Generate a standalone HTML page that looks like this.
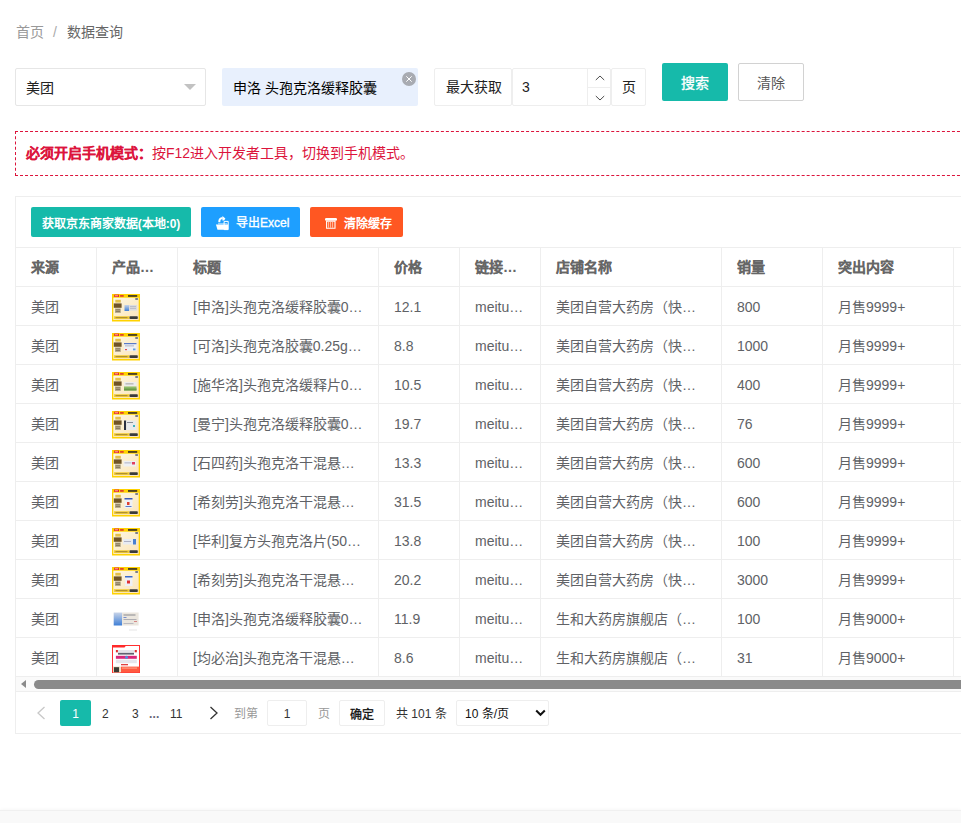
<!DOCTYPE html>
<html lang="zh-CN"><head><meta charset="utf-8">
<style>
*{box-sizing:border-box;margin:0;padding:0}
html,body{width:961px;height:823px;overflow:hidden;background:#fff}
body{font-family:"Liberation Sans",sans-serif;font-size:14px;color:#606266;position:relative}
.abs{position:absolute}
i{display:block}
.bc{left:16px;top:22px;line-height:20px;font-size:14px;color:#999}
.bc .sep{margin:0 10px 0 9px;color:#aaa}
.bc .cur{color:#666}
.sel{left:15px;top:68px;width:191px;height:38px;border:1px solid #e6e6e6;border-radius:2px}
.sel span{position:absolute;left:10px;top:9px;line-height:20px;color:#222}
.tri{position:absolute;left:168px;top:15px;width:0;height:0;border-left:6px solid transparent;border-right:6px solid transparent;border-top:6px solid #c2c2c2}
.tag{left:222px;top:68px;width:196px;height:38px;background:#e8f0fd;border-radius:2px}
.tag span{position:absolute;left:11px;top:10px;line-height:20px;color:#000}
.tagx{position:absolute;left:180px;top:4px;width:14px;height:14px;border-radius:50%;background:#a8abb2}
.grp{top:68px;height:38px;border:1px solid #eee;border-radius:2px;background:#fff}
.grp span{position:absolute;top:8px;line-height:20px;color:#222}
.btn{position:absolute;text-align:center;border-radius:2px}
.search{left:662px;top:63px;width:66px;height:38px;background:#16baaa;color:#fff;line-height:38px;padding-top:1px;-webkit-text-stroke:0.35px #fff}
.clear{left:738px;top:63px;width:66px;height:38px;border:1px solid #d2d2d2;color:#555;line-height:36px;padding-top:1px;background:#fff}
.alert{left:15px;top:131px;width:960px;height:45px;border:1px dashed #dc143c;color:#dc143c;}
.alert span{position:absolute;left:10px;top:11px;line-height:20px}
.box{left:15px;top:196px;width:960px;height:538px;border:1px solid #eee;border-right:none}
.tb{position:absolute;top:207px;height:30px;line-height:30px;padding-top:2px;color:#fff;font-size:12px;border-radius:2px;text-align:center}
.tbl{position:absolute;left:16px;top:247px;width:945px}
.row{display:flex;height:39px;border-top:1px solid #eee}
.row>div{flex:none;border-right:1px solid #eee;padding:1px 15px 0;line-height:38px;white-space:nowrap;overflow:hidden;text-overflow:ellipsis;position:relative}
.hd>div{font-weight:bold;color:#666;padding-top:0;-webkit-text-stroke:0.1px #666}
.c1{width:81px}.c2{width:81px}.c3{width:201px}.c4{width:81px}.c5{width:81px}.c6{width:181px}.c7{width:101px}.c8{width:131px}.c9{width:100px}
.img{position:absolute;left:15px;top:7px;width:28px;height:28px}
.sbar{position:absolute;left:16px;top:676px;width:945px;height:16px;background:#fafafa;border-top:1px solid #eee;border-bottom:1px solid #eee}
.thumb{position:absolute;left:18px;top:3px;width:940px;height:9px;border-radius:4.5px;background:#8a8a8a}
.larr{position:absolute;left:5px;top:3px;width:0;height:0;border-top:4.5px solid transparent;border-bottom:4.5px solid transparent;border-right:5px solid #8a8a8a}
.pg{position:absolute;font-size:12px;line-height:26px;padding-top:1px;top:700px;height:26px;color:#333}
</style></head><body>
<svg width="0" height="0" style="position:absolute">
<defs>
<linearGradient id="cg" x1="0" y1="0" x2="1" y2="1"><stop offset="0" stop-color="#fdf6e4"/><stop offset="0.6" stop-color="#fcecc8"/><stop offset="1" stop-color="#fbe3c0"/></linearGradient>
<linearGradient id="bg1" x1="0" y1="0" x2="0" y2="1"><stop offset="0" stop-color="#c8d4e8"/><stop offset="1" stop-color="#3f7fd6"/></linearGradient>
<symbol id="y" viewBox="0 0 28 28">
<rect x="0" y="0" width="28" height="27.5" fill="#ffd200"/>
<rect x="1.3" y="3.7" width="25.4" height="22.3" fill="url(#cg)"/>
<rect x="2.2" y="0.6" width="4.8" height="2.4" fill="#e52a2a"/>
<rect x="3" y="1.3" width="3" height="1" fill="#ffb0a0"/>
<rect x="8.1" y="1" width="3.6" height="1.8" fill="#e2452a"/>
<rect x="16" y="1" width="9.2" height="1.9" fill="#4f4320"/>
<rect x="23.3" y="4.2" width="2.6" height="1.6" fill="#59607a"/>
<rect x="3.3" y="5.8" width="5.5" height="2.8" fill="#e2c04a"/>
<rect x="1.8" y="9.4" width="7.8" height="4.4" fill="#6f5426"/>
<rect x="3" y="14.5" width="5.8" height="4.4" fill="#b4a888"/>
<rect x="3.8" y="15.5" width="4.2" height="0.7" fill="#7a6a50"/>
<rect x="3.8" y="17.2" width="4.2" height="0.7" fill="#7a6a50"/>
<rect x="2" y="22.2" width="15.5" height="2.9" fill="#f2cd3a"/>
<rect x="3.5" y="23" width="12" height="1.2" fill="#b09030"/>
<rect x="17.5" y="22.2" width="8.3" height="2.9" rx="0.8" fill="#3b3b3b"/>
</symbol>
<symbol id="p1" viewBox="0 0 28 28"><rect x="12.5" y="11" width="4.6" height="6" fill="url(#bg1)"/><rect x="17.1" y="11" width="7.9" height="5.6" fill="#dcdce0"/><rect x="18" y="12.5" width="6" height="0.6" fill="#9aa0b0"/><rect x="18" y="14.3" width="6" height="0.6" fill="#a8aab8"/></symbol>
<symbol id="p2" viewBox="0 0 28 28"><rect x="12" y="10" width="12.5" height="8" fill="#eef0f4"/><rect x="12" y="10" width="12.5" height="1.2" fill="#5a7ac8"/><rect x="13" y="12.5" width="9" height="0.8" fill="#a0a4b8"/><rect x="13" y="16" width="2" height="1.2" fill="#e05050"/><rect x="21" y="15.5" width="2.5" height="1.8" fill="#60a0e0"/></symbol>
<symbol id="p3" viewBox="0 0 28 28"><rect x="12" y="10" width="12.5" height="4.5" fill="#ececec"/><rect x="13.5" y="11.5" width="8" height="0.8" fill="#909090"/><rect x="12" y="14.5" width="12.5" height="4" fill="#8cbc6a"/><rect x="12" y="16.5" width="12.5" height="2" fill="#6a9a48"/></symbol>
<symbol id="p4" viewBox="0 0 28 28"><rect x="12" y="9.5" width="2.2" height="9.5" fill="#2a3040"/><rect x="14.2" y="9.5" width="10" height="9.5" fill="#e8eaec"/><rect x="15" y="11" width="6" height="0.8" fill="#707480"/><rect x="21" y="14" width="2" height="2" fill="#40b0c0"/></symbol>
<symbol id="p5" viewBox="0 0 28 28"><rect x="11.5" y="11" width="12.5" height="5.5" fill="#eef0f4"/><rect x="12.5" y="12.5" width="7" height="0.8" fill="#a0a4b8"/><rect x="20" y="12" width="3" height="2.5" fill="#e04060"/></symbol>
<symbol id="p6" viewBox="0 0 28 28"><rect x="12.5" y="9" width="8" height="10" fill="#eef0f6"/><rect x="12.5" y="9" width="8" height="1.5" fill="#3a5ab8"/><rect x="15" y="13" width="2.5" height="3" fill="#e04030"/><rect x="13.5" y="17" width="6" height="1" fill="#5a7ac8"/></symbol>
<symbol id="p7" viewBox="0 0 28 28"><rect x="11" y="11" width="13" height="5.5" fill="#e8ecf2"/><rect x="21" y="11" width="3" height="5.5" fill="#4a80d0"/><rect x="12" y="13" width="7" height="0.8" fill="#a0a4b8"/></symbol>
<symbol id="p8" viewBox="0 0 28 28"><rect x="13" y="9" width="7.5" height="10" fill="#eef0f6"/><rect x="13" y="9" width="7.5" height="1.5" fill="#3a6ac8"/><rect x="15" y="13.5" width="3" height="3" fill="#e03030"/></symbol>
</defs>
</svg>
<div class="abs bc">首页<span class="sep">/</span><span class="cur">数据查询</span></div>

<div class="abs sel"><span>美团</span><i class="tri"></i></div>
<div class="abs tag"><span>申洛 头孢克洛缓释胶囊</span><i class="tagx"><svg width="14" height="14" viewBox="0 0 14 14"><path d="M4.3 4.3L9.7 9.7M9.7 4.3L4.3 9.7" stroke="#fff" stroke-width="1"/></svg></i></div>
<div class="abs grp" style="left:434px;width:78px"><span style="left:11px">最大获取</span></div>
<div class="abs grp" style="left:512px;width:99px"><span style="left:9px">3</span>
<div class="abs" style="left:74px;top:-1px;width:24px;height:38px;border-left:1px solid #eee"><div class="abs" style="left:0;top:19px;width:23px;height:1px;background:#eee"></div>
<svg class="abs" style="left:7px;top:7px" width="10" height="6" viewBox="0 0 10 6"><path d="M0.8 5L5 1L9.2 5" fill="none" stroke="#3a3a3a" stroke-width="0.9"/></svg>
<svg class="abs" style="left:7px;top:27px" width="10" height="6" viewBox="0 0 10 6"><path d="M0.8 1L5 5L9.2 1" fill="none" stroke="#3a3a3a" stroke-width="0.9"/></svg>
</div></div>
<div class="abs grp" style="left:611px;width:35px"><span style="left:10px">页</span></div>
<div class="btn search">搜索</div>
<div class="btn clear">清除</div>

<div class="abs alert"><span><b style="-webkit-text-stroke:0.15px #dc143c">必须开启手机模式：</b>按F12进入开发者工具，切换到手机模式。</span></div>

<div class="abs box"></div>
<div class="tb" style="left:31px;width:160px;background:#16baaa;font-weight:bold">获取京东商家数据(本地:0)</div>
<div class="tb" style="left:201px;width:99px;background:#1e9fff;text-align:left;padding-left:35px;padding-top:1px;-webkit-text-stroke:0.35px #fff">导出Excel
<svg class="abs" style="left:14px;top:9px" width="15" height="15" viewBox="0 0 15 15"><path d="M9.1 5.4h4.1v8.2h-4.1z" fill="none" stroke="#fff" stroke-width="1"/><path d="M0.9 8.4H13.1V13.8H2.5z" fill="#fff"/><path d="M3 7.1h9v1.3h-9z" fill="#fff" opacity="0.55"/><path d="M4.3 6.2C4.2 3.6 5.3 2.1 7.6 2" fill="none" stroke="#fff" stroke-width="2"/><path d="M7.4 0L10.4 2.4L9.1 4.4L7.4 4.6z" fill="#fff"/></svg></div>
<div class="tb" style="left:310px;width:93px;background:#ff5722;font-weight:bold;text-align:left;padding-left:34px">清除缓存
<svg class="abs" style="left:15px;top:11px" width="12" height="11" viewBox="0 0 12 11"><rect x="0" y="0" width="12" height="2.8" rx="1.2" fill="#fff"/><path d="M1.6 3.3h8.4v7h-8.4z" fill="none" stroke="#fff" stroke-width="1.1"/><path d="M3.6 3.8v6M5.6 3.8v6M7.6 3.8v6" stroke="#ffcbb0" stroke-width="0.9"/></svg></div>

<div class="tbl">
<div class="row hd"><div class="c1">来源</div><div class="c2">产品图片</div><div class="c3">标题</div><div class="c4">价格</div><div class="c5">链接地址</div><div class="c6">店铺名称</div><div class="c7">销量</div><div class="c8">突出内容</div><div class="c9"></div></div>
<div class="row"><div class="c1">美团</div><div class="c2"><svg class="img"><use href="#y"/><use href="#p1"/></svg></div><div class="c3">[申洛]头孢克洛缓释胶囊0.375g*12粒</div><div class="c4">12.1</div><div class="c5">meituan.com</div><div class="c6">美团自营大药房（快送）</div><div class="c7">800</div><div class="c8">月售9999+</div><div class="c9"></div></div>
<div class="row"><div class="c1">美团</div><div class="c2"><svg class="img"><use href="#y"/><use href="#p2"/></svg></div><div class="c3">[可洛]头孢克洛胶囊0.25g*12粒</div><div class="c4">8.8</div><div class="c5">meituan.com</div><div class="c6">美团自营大药房（快送）</div><div class="c7">1000</div><div class="c8">月售9999+</div><div class="c9"></div></div>
<div class="row"><div class="c1">美团</div><div class="c2"><svg class="img"><use href="#y"/><use href="#p3"/></svg></div><div class="c3">[施华洛]头孢克洛缓释片0.375g</div><div class="c4">10.5</div><div class="c5">meituan.com</div><div class="c6">美团自营大药房（快送）</div><div class="c7">400</div><div class="c8">月售9999+</div><div class="c9"></div></div>
<div class="row"><div class="c1">美团</div><div class="c2"><svg class="img"><use href="#y"/><use href="#p4"/></svg></div><div class="c3">[曼宁]头孢克洛缓释胶囊0.375g</div><div class="c4">19.7</div><div class="c5">meituan.com</div><div class="c6">美团自营大药房（快送）</div><div class="c7">76</div><div class="c8">月售9999+</div><div class="c9"></div></div>
<div class="row"><div class="c1">美团</div><div class="c2"><svg class="img"><use href="#y"/><use href="#p5"/></svg></div><div class="c3">[石四药]头孢克洛干混悬剂0.125g</div><div class="c4">13.3</div><div class="c5">meituan.com</div><div class="c6">美团自营大药房（快送）</div><div class="c7">600</div><div class="c8">月售9999+</div><div class="c9"></div></div>
<div class="row"><div class="c1">美团</div><div class="c2"><svg class="img"><use href="#y"/><use href="#p6"/></svg></div><div class="c3">[希刻劳]头孢克洛干混悬剂0.125g</div><div class="c4">31.5</div><div class="c5">meituan.com</div><div class="c6">美团自营大药房（快送）</div><div class="c7">600</div><div class="c8">月售9999+</div><div class="c9"></div></div>
<div class="row"><div class="c1">美团</div><div class="c2"><svg class="img"><use href="#y"/><use href="#p7"/></svg></div><div class="c3">[毕利]复方头孢克洛片(50mg)</div><div class="c4">13.8</div><div class="c5">meituan.com</div><div class="c6">美团自营大药房（快送）</div><div class="c7">100</div><div class="c8">月售9999+</div><div class="c9"></div></div>
<div class="row"><div class="c1">美团</div><div class="c2"><svg class="img"><use href="#y"/><use href="#p8"/></svg></div><div class="c3">[希刻劳]头孢克洛干混悬剂0.125g</div><div class="c4">20.2</div><div class="c5">meituan.com</div><div class="c6">美团自营大药房（快送）</div><div class="c7">3000</div><div class="c8">月售9999+</div><div class="c9"></div></div>
<div class="row"><div class="c1">美团</div><div class="c2"><svg class="img" viewBox="0 0 28 28"><rect x="1.7" y="6.5" width="8.3" height="13" fill="url(#bg1)"/><rect x="10" y="6.5" width="16.6" height="13" fill="#ebe6de"/><rect x="11.5" y="8.5" width="12" height="1" fill="#8a8a90"/><rect x="11.5" y="11" width="3" height="0.8" fill="#5a7ac8"/><rect x="11.5" y="13" width="13" height="0.8" fill="#a0a0a8"/><rect x="22" y="15" width="3" height="0.8" fill="#d07070"/><rect x="11.5" y="17" width="10" height="0.8" fill="#b0b0b8"/><rect x="17" y="23" width="8" height="2" fill="#f2f2f2"/></svg></div><div class="c3">[申洛]头孢克洛缓释胶囊0.375g</div><div class="c4">11.9</div><div class="c5">meituan.com</div><div class="c6">生和大药房旗舰店（快送）</div><div class="c7">100</div><div class="c8">月售9000+</div><div class="c9"></div></div>
<div class="row"><div class="c1">美团</div><div class="c2"><svg class="img" viewBox="0 0 28 28"><rect x="0.5" y="0.5" width="27" height="27" fill="#fff" stroke="#ff3030" stroke-width="1"/><path d="M0 0h14.5l-2 2.6H0z" fill="#ff2a2a"/><rect x="3.9" y="5" width="20.9" height="2.3" fill="#e4e4ea"/><rect x="3.9" y="5" width="2" height="2.3" fill="#e03030"/><rect x="22.8" y="5" width="2" height="2.3" fill="#e03030"/><rect x="6" y="7.8" width="16" height="1.8" fill="#606070"/><rect x="3.9" y="10.8" width="20.9" height="3" fill="#d8287a"/><circle cx="14.5" cy="12.3" r="1.5" fill="#4a90e0"/><rect x="3.9" y="14.7" width="20.9" height="3.5" fill="#e6e6ec"/><rect x="9" y="19" width="7" height="1.3" fill="#e04040"/><rect x="1" y="21.6" width="7.7" height="5.9" fill="#e8d8b8"/><rect x="2" y="22.2" width="5" height="5" fill="#3a3a34"/><rect x="9" y="21.6" width="18.5" height="5.9" fill="#ff5a40"/><rect x="10" y="22.5" width="15" height="1.2" fill="#ff9a80"/></svg></div><div class="c3">[均必治]头孢克洛干混悬剂0.125g</div><div class="c4">8.6</div><div class="c5">meituan.com</div><div class="c6">生和大药房旗舰店（快送）</div><div class="c7">31</div><div class="c8">月售9000+</div><div class="c9"></div></div>
</div>
<div class="sbar"><i class="larr"></i><i class="thumb"></i></div>

<svg class="abs" style="left:36px;top:706px" width="10" height="14" viewBox="0 0 10 14"><path d="M8.5 1L2 7l6.5 6" fill="none" stroke="#c8c8c8" stroke-width="1.3"/></svg>
<div class="pg" style="left:60px;width:31px;background:#16baaa;color:#fff;text-align:center;border-radius:2px">1</div>
<div class="pg" style="left:102px">2</div>
<div class="pg" style="left:132px">3</div>
<div class="pg" style="left:149px;color:#667;letter-spacing:0.2px;font-weight:bold">...</div>
<div class="pg" style="left:170px">11</div>
<svg class="abs" style="left:209px;top:706px" width="10" height="14" viewBox="0 0 10 14"><path d="M1.5 1L8 7l-6.5 6" fill="none" stroke="#333" stroke-width="1.3"/></svg>
<div class="pg" style="left:234px;color:#999">到第</div>
<div class="pg" style="left:267px;width:40px;border:1px solid #eee;text-align:center;line-height:24px;border-radius:2px">1</div>
<div class="pg" style="left:318px;color:#999">页</div>
<div class="pg" style="left:339px;width:46px;border:1px solid #eee;text-align:center;line-height:24px;padding-top:2px;color:#111;border-radius:2px;-webkit-text-stroke:0.3px #111">确定</div>
<div class="pg" style="left:396px;color:#333">共 101 条</div>
<div class="pg" style="left:456px;width:93px;border:1px solid #eee;line-height:24px;color:#111;padding-left:8px;border-radius:2px">10 条/页
<svg class="abs" style="left:78px;top:8px" width="11" height="8" viewBox="0 0 11 8"><path d="M1.2 1.5L5.5 5.8L9.8 1.5" fill="none" stroke="#111" stroke-width="2"/></svg></div>

<div class="abs" style="left:0;top:810px;width:961px;height:13px;background:#f9f9f9;border-top:1px solid #f0f0f0;box-shadow:0 -1px 3px rgba(0,0,0,0.03)"></div>
</body></html>
